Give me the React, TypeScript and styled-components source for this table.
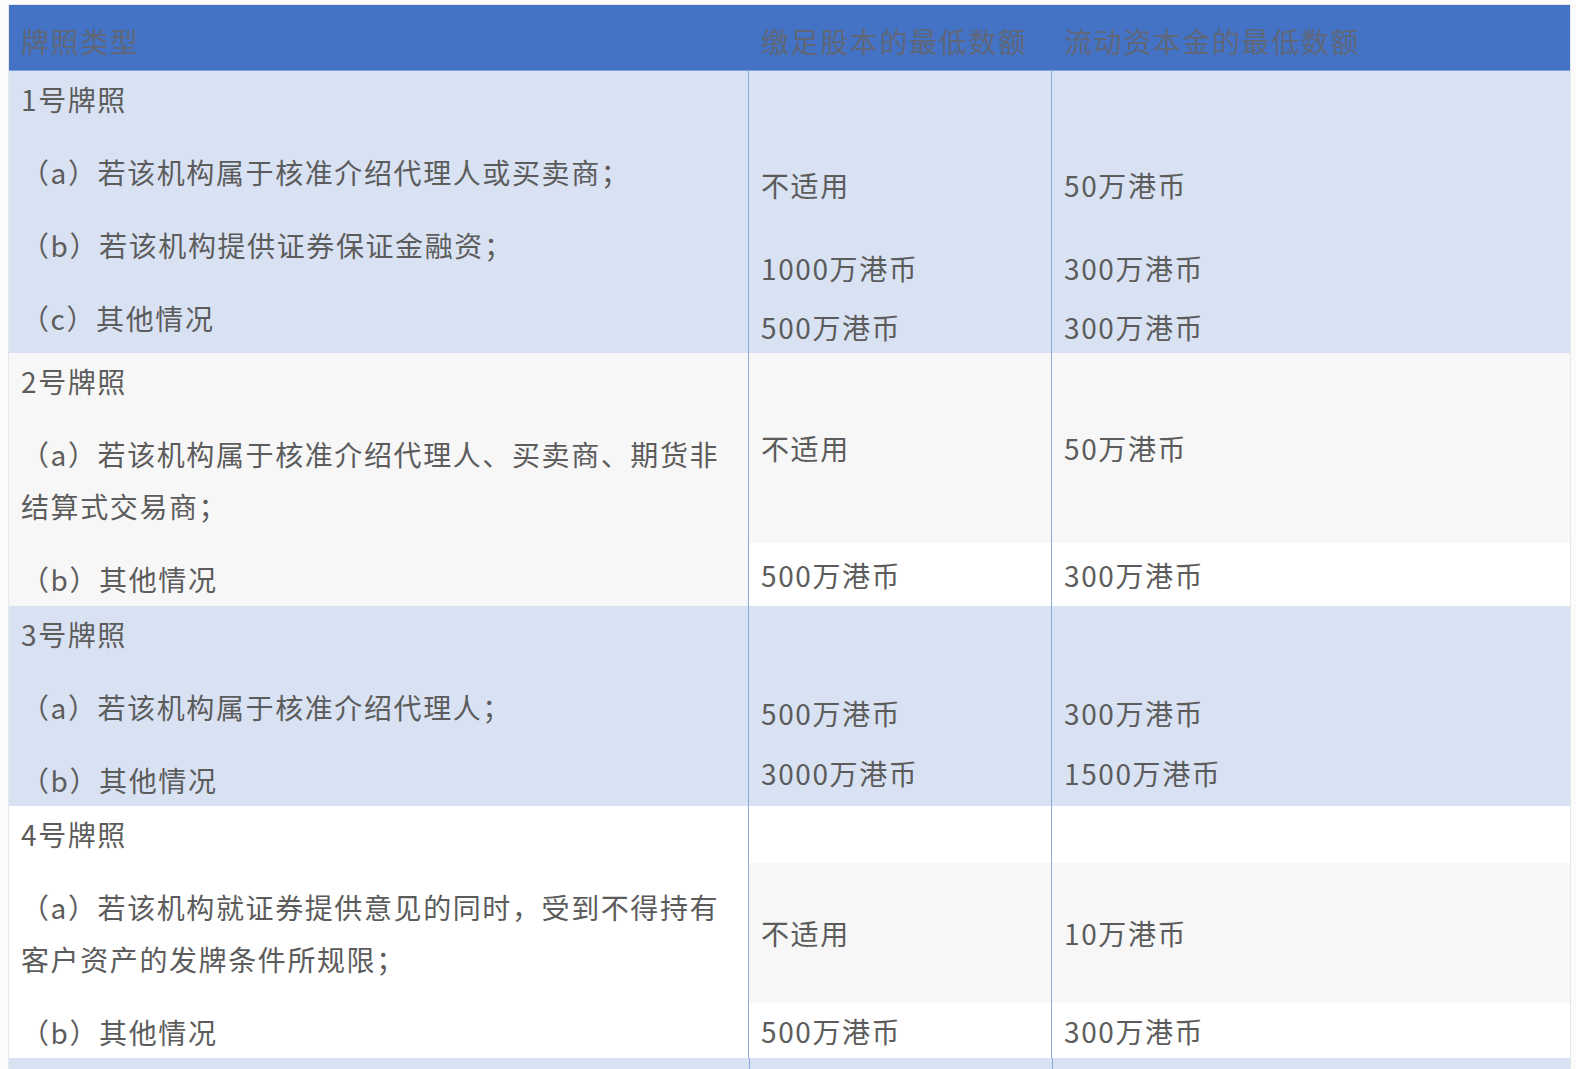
import React from 'react';
import styled, { createGlobalStyle } from 'styled-components';

type Tone = 'blue' | 'grey' | 'white';

const toneColor: Record<Tone, string> = {
    blue: '#d9e2f3',
    grey: '#f7f7f7',
    white: '#ffffff',
};

interface SubRow {
    tone: Tone;
    height: number;
    align: 'center' | 'flex-end';
    paid?: string;
    liquid?: string;
}

interface LicenceGroup {
    tone: Tone;
    lines: string[];
    rows: SubRow[];
}

const GlobalStyle = createGlobalStyle`
    html, body {
        margin: 0;
        padding: 0;
        background: #fbfbfb;
    }

    body {
        font-family: "Noto Sans CJK SC", "Noto Sans", sans-serif;
        color: #5c5c5c;
    }
`;

const Page = styled.div`
    padding: 5px 0 0 9px;
`;

const Table = styled.div`
    width: 1561px;
    outline: 1px solid #e4e7ec;
    font-size: 28px;
    letter-spacing: 1.6px;
`;

const HeaderRow = styled.div`
    display: grid;
    grid-template-columns: 740px 303px 518px;
    height: 65px;
    background: #4472c4;
    border-bottom: 1px solid #7f9fd9;
`;

const HeaderCell = styled.div`
    display: flex;
    align-items: center;
    padding: 6px 0 0 12px;
    color: #5f6778;
    white-space: nowrap;
`;

const Group = styled.div`
    display: grid;
    grid-template-columns: 740px 821px;
`;

const LicenceCell = styled.div<{ $tone: Tone }>`
    display: flex;
    flex-direction: column;
    gap: 21px;
    padding: 2px 20px 0 12px;
    background: ${({ $tone }) => toneColor[$tone]};
    border-right: 1px solid #8eaadb;
`;

const Line = styled.p`
    margin: 0;
    line-height: 52px;
`;

const Amounts = styled.div`
    display: flex;
    flex-direction: column;
`;

const AmountRow = styled.div<{ $tone: Tone; $align: 'center' | 'flex-end' }>`
    display: grid;
    grid-template-columns: 302px 519px;
    background: ${({ $tone }) => toneColor[$tone]};
    align-items: ${({ $align }) => $align};
`;

const AmountCell = styled.div<{ $divider?: boolean }>`
    display: flex;
    align-items: inherit;
    align-self: stretch;
    padding-left: 12px;
    line-height: 52px;
    border-left: ${({ $divider }) => ($divider ? '1px solid #8eaadb' : 'none')};
    white-space: nowrap;
`;

const TrailingBand = styled.div`
    display: grid;
    grid-template-columns: 740px 303px 518px;
    height: 60px;
    background: #d9e2f3;

    div + div {
        border-left: 1px solid #8eaadb;
    }
`;

const groups: LicenceGroup[] = [
    {
        tone: 'blue',
        lines: ['1号牌照', '（a）若该机构属于核准介绍代理人或买卖商；', '（b）若该机构提供证券保证金融资；', '（c）其他情况'],
        rows: [
            { tone: 'blue', height: 140, align: 'flex-end', paid: '不适用', liquid: '50万港币' },
            { tone: 'blue', height: 83, align: 'flex-end', paid: '1000万港币', liquid: '300万港币' },
            { tone: 'blue', height: 59, align: 'flex-end', paid: '500万港币', liquid: '300万港币' },
        ],
    },
    {
        tone: 'grey',
        lines: ['2号牌照', '（a）若该机构属于核准介绍代理人、买卖商、期货非结算式交易商；', '（b）其他情况'],
        rows: [
            { tone: 'grey', height: 190, align: 'center', paid: '不适用', liquid: '50万港币' },
            { tone: 'white', height: 63, align: 'center', paid: '500万港币', liquid: '300万港币' },
        ],
    },
    {
        tone: 'blue',
        lines: ['3号牌照', '（a）若该机构属于核准介绍代理人；', '（b）其他情况'],
        rows: [
            { tone: 'blue', height: 133, align: 'flex-end', paid: '500万港币', liquid: '300万港币' },
            { tone: 'blue', height: 67, align: 'center', paid: '3000万港币', liquid: '1500万港币' },
        ],
    },
    {
        tone: 'white',
        lines: ['4号牌照', '（a）若该机构就证券提供意见的同时，受到不得持有客户资产的发牌条件所规限；', '（b）其他情况'],
        rows: [
            { tone: 'white', height: 57, align: 'center' },
            { tone: 'grey', height: 140, align: 'center', paid: '不适用', liquid: '10万港币' },
            { tone: 'white', height: 55, align: 'center', paid: '500万港币', liquid: '300万港币' },
        ],
    },
];

const App: React.FC = () => {
    return (
        <>
            <GlobalStyle />
            <Page>
                <Table>
                    <HeaderRow>
                        <HeaderCell>牌照类型</HeaderCell>
                        <HeaderCell>缴足股本的最低数额</HeaderCell>
                        <HeaderCell>流动资本金的最低数额</HeaderCell>
                    </HeaderRow>
                    {groups.map((group) => (
                        <Group key={group.lines[0]}>
                            <LicenceCell $tone={group.tone}>
                                {group.lines.map((line) => (
                                    <Line key={line}>{line}</Line>
                                ))}
                            </LicenceCell>
                            <Amounts>
                                {group.rows.map((row, i) => (
                                    <AmountRow
                                        key={i}
                                        $tone={row.tone}
                                        $align={row.align}
                                        style={{ height: row.height }}
                                    >
                                        <AmountCell>{row.paid}</AmountCell>
                                        <AmountCell $divider>{row.liquid}</AmountCell>
                                    </AmountRow>
                                ))}
                            </Amounts>
                        </Group>
                    ))}
                    <TrailingBand>
                        <div />
                        <div />
                        <div />
                    </TrailingBand>
                </Table>
            </Page>
        </>
    );
};

export default App;
